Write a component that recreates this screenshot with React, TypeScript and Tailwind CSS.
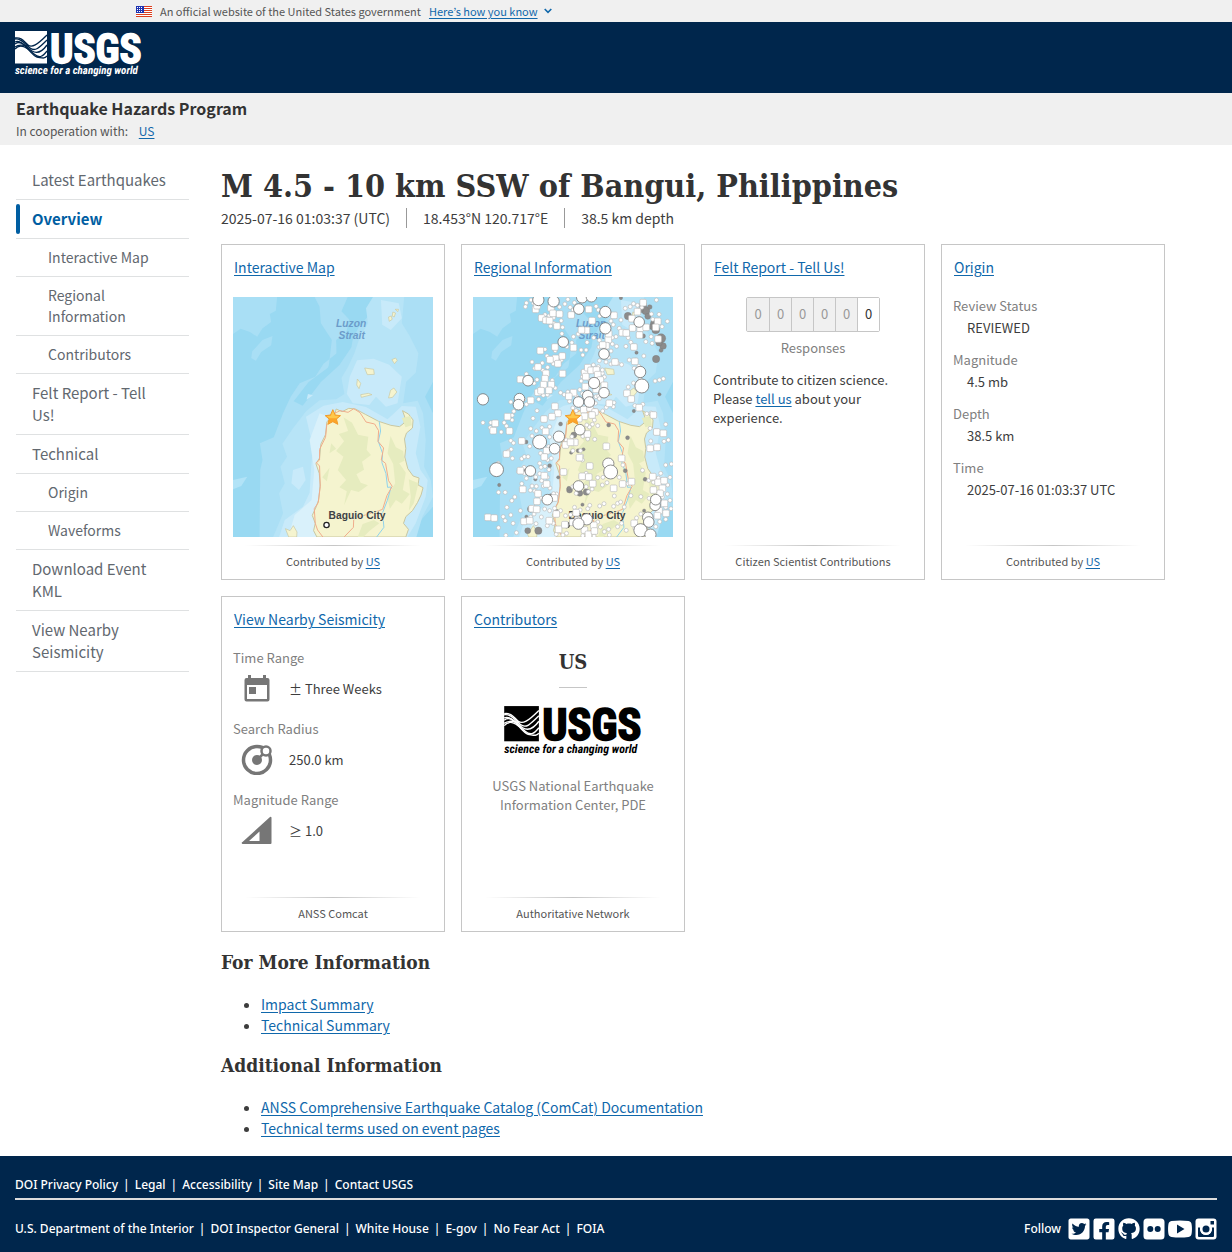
import React from 'react';
import { FaFacebookSquare, FaGithub, FaTwitterSquare } from 'react-icons/fa';

const link = 'text-[#1068ab] underline underline-offset-2';
const serif = "font-['DejaVu_Serif_Condensed','DejaVu_Serif',serif] font-bold";

const navItems = [
  { label: 'Latest Earthquakes' },
  { label: 'Overview', active: true },
  { label: 'Interactive Map', sub: true },
  { label: 'Regional Information', sub: true },
  { label: 'Contributors', sub: true },
  { label: 'Felt Report - Tell Us!' },
  { label: 'Technical' },
  { label: 'Origin', sub: true },
  { label: 'Waveforms', sub: true },
  { label: 'Download Event KML' },
  { label: 'View Nearby Seismicity' },
];

const originFacts = [
  ['Review Status', 'REVIEWED'],
  ['Magnitude', '4.5 mb'],
  ['Depth', '38.5 km'],
  ['Time', '2025-07-16 01:03:37 UTC'],
];

const footerLinks = [
  ['DOI Privacy Policy', 'Legal', 'Accessibility', 'Site Map', 'Contact USGS'],
  ['U.S. Department of the Interior', 'DOI Inspector General', 'White House', 'E-gov', 'No Fear Act', 'FOIA'],
];

// x, y, radius
const bigQuakes = [
  [236, 180, 17], [282, 184, 17], [368, 172, 17], [396, 170, 16], [358, 207, 16], [438, 216, 17], [438, 265, 17], [540, 246, 16],
  [311, 306, 16], [434, 342, 16], [543, 396, 17], [548, 438, 21], [205, 422, 16], [69, 478, 17], [179, 476, 16], [176, 494, 16],
  [404, 429, 17], [434, 458, 16], [385, 467, 16], [357, 486, 16], [390, 486, 16], [361, 569, 16], [298, 590, 17], [240, 606, 21],
  [285, 626, 16], [110, 689, 21], [212, 693, 16], [447, 671, 17], [454, 696, 21], [357, 738, 16], [263, 779, 16], [588, 796, 16],
  [590, 779, 16], [566, 832, 16], [569, 846, 16], [544, 871, 20], [574, 884, 17], [382, 838, 17], [357, 851, 17],
];

const squareQuakes = [
  [228, 208], [232, 197], [246, 234], [259, 241], [270, 242], [292, 258], [274, 204], [335, 225], [388, 208], [398, 242], [381, 271],
  [366, 270], [464, 226], [535, 215], [518, 236], [552, 188], [596, 244], [590, 262], [520, 264], [543, 265], [541, 285], [489, 278],
  [447, 299], [440, 317], [430, 315], [524, 321], [527, 364], [467, 366], [242, 332], [286, 321], [342, 323], [308, 348], [288, 355],
  [271, 359], [295, 371], [235, 381], [309, 401], [259, 400], [182, 418], [256, 416], [252, 434], [275, 434], [235, 457], [244, 452],
  [268, 451], [213, 481], [286, 499], [295, 520], [253, 537], [277, 530], [143, 530], [106, 550], [100, 572], [149, 573], [186, 603],
  [258, 574], [140, 642], [261, 632], [254, 651], [376, 398], [385, 383], [395, 391], [411, 390], [415, 404], [379, 410], [423, 420],
  [435, 436], [410, 448], [378, 440], [342, 458], [328, 469], [503, 460], [516, 477], [450, 490], [540, 503], [583, 525], [373, 509],
  [392, 504], [407, 516], [398, 525], [375, 529], [358, 536], [384, 582], [346, 607], [318, 615], [333, 607], [441, 619], [573, 625],
  [594, 622], [593, 576], [613, 580], [360, 653], [487, 655], [312, 696], [391, 678], [368, 709], [388, 711], [400, 731], [490, 732],
  [463, 745], [517, 725], [581, 710], [189, 748], [182, 692], [254, 707], [261, 732], [235, 761], [232, 784], [217, 806], [231, 808],
  [284, 774], [290, 822], [84, 832], [103, 834], [193, 844], [210, 842], [269, 842], [297, 868], [316, 854], [375, 870], [387, 883],
  [403, 856], [405, 873], [597, 727], [610, 745], [603, 760], [616, 790], [600, 812], [595, 827], [340, 847], [583, 750], [615, 722],
  [621, 820], [280, 220], [300, 222], [448, 281], [501, 279], [561, 262], [355, 840], [525, 850], [350, 818], [597, 297],
];

const smallQuakes = [
  [200, 189], [197, 200], [214, 180], [222, 190], [256, 224], [268, 228], [282, 233], [283, 250], [273, 258], [305, 242], [309, 262],
  [307, 281], [316, 192], [300, 201], [332, 202], [341, 210], [325, 178], [410, 199], [417, 210], [421, 228], [455, 243], [462, 254],
  [480, 265], [470, 290], [459, 293], [485, 240], [498, 205], [513, 200], [523, 191], [535, 196], [548, 202], [577, 222], [581, 238],
  [625, 244], [609, 260], [576, 290], [579, 310], [560, 305], [515, 307], [507, 293], [500, 319], [554, 348], [592, 180], [600, 223],
  [342, 290], [356, 282], [383, 307], [403, 293], [420, 301], [419, 321], [455, 333], [459, 312], [472, 319], [448, 352], [420, 362],
  [337, 308], [322, 320], [287, 332], [256, 328], [262, 348], [305, 361], [281, 371], [248, 369], [217, 366], [225, 385], [250, 391],
  [264, 382], [232, 419], [223, 430], [200, 402], [278, 421], [287, 444], [263, 464], [251, 466], [237, 478], [200, 493], [192, 478],
  [162, 514], [157, 526], [133, 548], [69, 548], [93, 548], [91, 563], [124, 576], [157, 540], [213, 566], [220, 535], [232, 512],
  [153, 486], [140, 558], [153, 602], [161, 609], [154, 628], [158, 655], [145, 634], [115, 670], [186, 656], [194, 650], [205, 650],
  [210, 619], [217, 588], [230, 573], [247, 563], [270, 560], [270, 591], [253, 610], [267, 620], [243, 640], [264, 660], [275, 655],
  [240, 670], [244, 682], [256, 679], [268, 689], [240, 701], [228, 711], [263, 712], [246, 722], [251, 738], [271, 744], [230, 739],
  [217, 738], [212, 751], [225, 753], [244, 775], [200, 715], [194, 700], [176, 695], [193, 682], [186, 731], [116, 757], [136, 757],
  [165, 771], [156, 782], [141, 802], [130, 830], [136, 842], [153, 825], [182, 812], [160, 850], [116, 863], [138, 886], [170, 878],
  [223, 822], [213, 831], [229, 851], [245, 831], [255, 807], [270, 812], [263, 857], [281, 850], [285, 805], [291, 762], [282, 761],
  [303, 812], [318, 827], [333, 824], [345, 802], [362, 810], [385, 806], [391, 796], [421, 798], [434, 791], [463, 799], [475, 790],
  [484, 786], [465, 768], [515, 767], [545, 770], [570, 775], [495, 801], [545, 822], [532, 834], [527, 865], [501, 871], [487, 850],
  [475, 860], [448, 868], [435, 875], [423, 861], [415, 846], [404, 888], [370, 887], [321, 880], [310, 885], [290, 883], [450, 885],
  [610, 771], [625, 762], [633, 781], [620, 802], [636, 806], [620, 838], [602, 845], [590, 860], [626, 735], [633, 712], [598, 714],
  [569, 721], [583, 727], [605, 700], [620, 675], [637, 672], [550, 691], [628, 600], [615, 604], [575, 603], [573, 565], [620, 553],
  [576, 519], [563, 521], [551, 493], [527, 497], [507, 441], [523, 429], [543, 418], [588, 423], [601, 420], [613, 416], [510, 360],
  [539, 379], [525, 385], [487, 374], [475, 370], [455, 372], [440, 366], [464, 488], [462, 500], [441, 502], [430, 513], [408, 490],
  [369, 461], [361, 449], [351, 469], [325, 456], [314, 464], [303, 458], [330, 484], [340, 504], [350, 512], [405, 540], [399, 553],
  [390, 561], [382, 555], [370, 589], [385, 597], [406, 598], [415, 557], [337, 590], [320, 600], [340, 632], [363, 632], [367, 648],
  [369, 660], [380, 700], [380, 740], [398, 747], [340, 740], [350, 760], [387, 755], [415, 713], [429, 735], [431, 712], [480, 712],
  [491, 675], [506, 731], [443, 728], [370, 395], [369, 410], [365, 423], [429, 400], [435, 411], [429, 390], [402, 375], [417, 380],
  [370, 345], [380, 330], [365, 330], [391, 420], [410, 470], [418, 468], [420, 476], [345, 188],
];

const deepQuakes = [
  [552, 196, 11], [560, 212, 12], [572, 201, 7], [545, 210, 8], [506, 228, 11], [566, 229, 9], [585, 250, 11], [590, 269, 12],
  [579, 260, 9], [606, 295, 14], [612, 318, 10], [600, 308, 10], [606, 331, 6], [591, 357, 11], [532, 338, 5], [552, 288, 7],
  [485, 174, 5], [601, 463, 5], [524, 513, 5], [303, 552, 6], [448, 555, 6], [505, 593, 6], [343, 585, 9], [199, 606, 6], [335, 638, 5],
  [356, 632, 6], [372, 628, 5], [270, 677, 6], [296, 712, 5], [227, 718, 5], [498, 692, 6], [558, 718, 6], [330, 750, 9], [328, 745, 6],
  [361, 760, 9], [381, 756, 10], [274, 770, 9], [118, 735, 5], [213, 807, 10], [369, 794, 5], [204, 872, 9], [236, 872, 11],
  [200, 830, 5], [291, 815, 7], [555, 812, 5], [195, 690, 8],
];

// Coordinates of both thumbnails share one 603x720 space.
const MapThumb = ({ label, quakes }: { label: string; quakes?: boolean }) => (
  <svg viewBox="39 171 603 720" className="block h-60 w-full" role="img" aria-label={label} preserveAspectRatio="none">
    <rect x="39" y="171" width="603" height="720" fill="#99d9f2" />
    <path fill="#a9dff5" d="M39 171H172L168 212 150 222 154 246 128 265 112 290 90 276 62 266 39 282ZM97 334L128 300 158 288 154 316 124 336 108 362 94 354Z" />
    <path fill="#abdff5" d="M285 171H385L366 214 391 240 380 278 350 300 352 340 312 371 287 410 240 430 213 470 190 520 162 592 120 610 128 660 121 690 119 891H560L642 800V520L618 470 642 425V171H480L452 222 418 262 380 335 354 375 327 384 337 300 304 250 300 200Z" />
    <path fill="#99d9f2" d="M386 171H449L441 225 405 270 396 322 360 375 304 426 270 470 249 497 222 484 267 426 324 384 351 345 352 302 382 276 391 235 372 214Z" />
    <path fill="#b7e4f7" d="M461 171H555L548 250 570 285 598 340 590 398 561 425 552 490 596 482 612 520 620 600 615 680 635 720 642 770 610 830 592 891H160L190 820 178 760 195 730 182 680 202 650 188 611 220 565 260 513 300 481 350 478 375 462 366 414 386 380 405 340 422 290 446 250 440 205Z" />
    <path fill="#c8eafa" d="M485 180L539 190 548 235 515 270 489 254ZM413 361L463 356 510 374 548 410 535 490 500 500 470 470 450 495 400 490 382 461 391 410ZM259 530L312 497 370 486 440 501 505 538 548 498 590 500 604 560 590 640 604 690 626 720 620 770 590 850 565 891H178L195 840 250 800 270 758 274 690 280 620ZM220 690L250 680 258 720 238 750 215 730ZM265 462L280 466 261 479Z" />
    <path fill="#b2e3f7" d="M39 720L82 710 64 738 39 748Z" />
    <path fill="#d9f1fb" d="M300 520L270 600 284 690 276 780 225 825 205 891H290L305 640 326 530Z" />
    <path
      fill="#f5f4cf"
      stroke="#c9c7a2"
      strokeWidth="3"
      d="M322 545L345 527 350 507 368 515 388 505 408 507 438 523 478 544 515 556 541 560 555 549 557 531 550 512 568 522 582 540 580 564 562 579 556 597 560 625 557 651 566 686 582 708 600 714 597 735 612 743 606 765 595 788 580 812 560 830 553 850 568 868 560 891H292L282 872 287 850 278 826 290 800 297 780 302 735 299 700 289 671 300 654 304 612 318 584Z"
    />
    <path fill="#f5f4cf" stroke="#c9c7a2" strokeWidth="2" d="M436 384L463 388 465 403 444 404ZM414 417L424 430 419 446 412 435ZM424 464L447 460 458 464 426 472ZM514 451L524 444 533 456 520 472 508 474ZM518 359L529 354 534 361 526 371ZM508 231L516 228 519 238 510 244ZM521 216L529 219 525 231 519 228ZM528 208L538 208 536 215ZM197 866L211 872 221 857 232 876 231 891H207Z" />
    <path fill="#e6ecbf" d="M372 532L398 548 416 584 447 590 442 630 455 645 428 665 434 689 411 703 424 728 446 736 418 756 395 750 374 796 382 754 360 742 380 720 355 690 372 650 350 633 374 604 358 582 386 573ZM514 588L530 622 552 633 556 662 540 670 560 698 551 750 572 762 548 791 530 780 512 806 504 770 528 730 522 672 505 640ZM308 712L330 683 322 724ZM335 610L350 626 330 640ZM569 718L598 730 584 790 569 812 575 770ZM430 852L464 840 480 850 450 873 432 891H415ZM548 534L574 528 578 556 559 562Z" />
    <path fill="none" stroke="#8fd3ec" strokeWidth="3" d="M480 545L484 573 477 604 490 640 488 668 500 700 505 742 516 741 504 782 490 818 494 862 472 891" />
    <path fill="none" stroke="#f0ac8c" strokeWidth="3" d="M322 552L318 592 300 628 300 660 290 668 300 678 302 740 296 788 284 806 287 850 294 870 310 891M345 520L362 512 386 517 403 506 422 518 440 546 466 552 478 572 476 604 493 624 486 660 499 670 508 722 519 739 503 767 490 808 462 818 431 827 403 838 402 862 374 891" />
    <g fontFamily="Liberation Sans, Arial, sans-serif" fontWeight="bold">
      <g fill="#6c9cca" fontStyle="italic" fontSize="31" textAnchor="middle">
        <text x="395" y="260">Luzon</text>
        <text x="397" y="296">Strait</text>
      </g>
      <text x="327" y="838" fontSize="31" fill="#3d4246" stroke="#f5f4cf" strokeWidth="4" paintOrder="stroke">Baguio City</text>
    </g>
    <circle cx="321" cy="855" r="8" fill="#fff" stroke="#222" strokeWidth="4" />
    {quakes && (
      <>
        <g fill="#8b8b8b" stroke="#777" strokeWidth="1">
          {deepQuakes.map(([x, y, r], i) => <circle key={i} cx={x} cy={y} r={r} />)}
        </g>
        <g fill="#fff" stroke="#bbb" strokeWidth="2">
          {smallQuakes.map(([x, y], i) => <circle key={i} cx={x} cy={y} r="6" />)}
          {squareQuakes.map(([x, y], i) => <rect key={i} x={x - 10} y={y - 10} width="20" height="20" rx="4" />)}
        </g>
        <g fill="#fff" stroke="#777" strokeWidth="2.5">
          {bigQuakes.map(([x, y, r], i) => <circle key={i} cx={x} cy={y} r={r} />)}
        </g>
      </>
    )}
    <path d="M340 509L347 525 363 527 351 537 355 553 340 545 325 553 329 537 317 527 333 525Z" fill="#fca528" stroke="#f39c2c" strokeWidth="3" strokeLinejoin="round" />
    <path d="M340 513L346 527 359 529 350 535H330L321 529 334 527Z" fill="#ffc84a" />
  </svg>
);

const UsgsLogo = ({ className, wave }: { className: string; wave: string }) => (
  <svg viewBox="0 0 127 48" className={`overflow-visible ${className}`} fill="currentColor" role="img" aria-label="USGS science for a changing world">
    <rect y="1" width="32" height="32.5" />
    <g fill="none" stroke={wave} strokeWidth="1.3">
      <path d="M0 8C7 7 9 12 13 15S22 15 32 5" />
      <path d="M0 9C6 8 10 14 15 18S24 18 32 10" />
      <path d="M0 14C6 9 12 18 17 21S27 22 32 15" />
      <path d="M0 19C6 12 13 19 19 24S28 26 32 21" />
      <path d="M0 12C8 8 16 26 22 27S29 29 32 26" />
      <path d="M0 17C5 13 9 16 14 16" />
    </g>
    <g fontFamily="Liberation Sans Narrow, Roboto Condensed, Liberation Sans, sans-serif" fontWeight="bold" textRendering="geometricPrecision">
      <text x="35" y="32.500" fontSize="41" stroke="currentColor" strokeWidth="1.5">USGS</text>
      <text x="0" y="44" fontSize="11" fontStyle="italic">science for a changing world</text>
    </g>
  </svg>
);

const Card = ({ title, footer, children }: { title: string; footer: React.ReactNode; children: React.ReactNode }) => (
  <section className="flex h-84 w-56 flex-col border border-[#c6c6c6] px-[11px] text-[13px] leading-[19px]">
    <h2 className="px-px pt-[11px] text-[14px] leading-[22px]">
      <a href="#" className={link}>{title}</a>
    </h2>
    <div className="mt-[19px] flex-1">{children}</div>
    <div className="mx-3 h-px bg-linear-to-r from-transparent via-[#c6c6c6] to-transparent" />
    <p className="pt-[6px] pb-[9px] text-center text-[11px] leading-[18px] text-[#555]">{footer}</p>
  </section>
);

const ContributedBy = () => (
  <>Contributed by <a href="#" className={link}>US</a></>
);

const searchFacts = [
  {
    label: 'Time Range',
    value: '± Three Weeks',
    icon: <path fillRule="evenodd" d="M7 0h3v3h12V0h3v3h1.500a2 2 0 0 1 2 2v19.500a2 2 0 0 1-2 2h-21a2 2 0 0 1-2-2V5a2 2 0 0 1 2-2H7ZM6 10v14h20V10ZM8 12h7v7H8Z" />,
  },
  {
    label: 'Search Radius',
    value: '250.0 km',
    icon: (
      <g fill="none" stroke="currentColor">
        <circle cx="16" cy="14" r="13.500" strokeWidth="3.500" />
        <circle cx="16" cy="14" r="5" fill="currentColor" stroke="none" />
        <path d="M16 14L23 7" strokeWidth="2.500" />
        <circle cx="25" cy="5" r="4.500" fill="#fff" strokeWidth="2.500" />
      </g>
    ),
  },
  {
    label: 'Magnitude Range',
    value: '≥ 1.0',
    icon: <path fillRule="evenodd" d="M29 0a1 1 0 0 1 1.500 1V26a1 1 0 0 1-1 1H2a1 1 0 0 1-.5-2ZM18.500 14.500L8 24h10.500Z" />,
  },
];

const App = () => {
  return (
    <div className="font-['Noto_Sans_CJK_JP',sans-serif] text-[#3d3d3d]">
      <div className="flex h-[22px] items-center bg-[#f0f0f0] pl-[136px] text-[11px] leading-[18px] text-[#555]">
        <svg viewBox="0 0 16 11" className="mr-2 h-[11px] w-4" aria-hidden="true">
          <rect width="16" height="11" fill="#fff" />
          <path d="M0 .5h16M0 2.500h16M0 4.500h16M0 6.500h16M0 8.500h16M0 10.500h16" stroke="#db3e1f" strokeWidth="1" />
          <rect width="8" height="7" fill="#1e33b1" />
          <path d="M1 1.500h6M1 3.500h6M1 5.500h6" stroke="#fff" strokeDasharray="1 1" />
        </svg>
        <span className="mr-2">An official website of the United States government</span>
        <button type="button" className={`flex items-center gap-1.5 ${link}`}>
          Here’s how you know
          <svg viewBox="0 0 8 6" className="h-1.5 w-2" fill="none" stroke="currentColor" strokeWidth="1.6" aria-hidden="true">
            <path d="M.7 1L4 4.300 7.300 1" />
          </svg>
        </button>
      </div>

      <header>
        <div className="h-[71px] bg-[#00264c] px-[15px] pt-2 text-white">
          <a href="#" className="inline-block">
            <UsgsLogo className="block h-12 w-[127px]" wave="#00264c" />
          </a>
        </div>
        <div className="h-[52px] bg-[#f0f0f0] px-4 pt-1">
          <p className="text-[16px] leading-[22px] font-bold text-[#333]">Earthquake Hazards Program</p>
          <p className="pt-[3px] text-[12px] leading-[18px] text-[#555]">
            In cooperation with: <a href="#" className={`ml-2 ${link}`}>US</a>
          </p>
        </div>
      </header>

      <div className="flex gap-8 px-4 pt-4 pb-[17px]">
        <nav className="w-[173px] shrink-0">
          <ul>
            {navItems.map((item) => (
              <li key={item.label} className="border-b border-[#dfe1e2]">
                {item.active ? (
                  <a href="#" className="relative block px-4 py-2 text-[15px] leading-[22px] font-bold text-[#005ea2]">
                    <span className="absolute inset-y-1 left-0 w-1 rounded-full bg-[#005ea2]" />
                    {item.label}
                  </a>
                ) : (
                  <a
                    href="#"
                    className={`block py-2 pr-5 text-[#62686f] ${item.sub ? 'pl-8 text-[14px] leading-[21px]' : 'pl-4 text-[15px] leading-[22px]'}`}
                  >
                    {item.label}
                  </a>
                )}
              </li>
            ))}
          </ul>
        </nav>

        <main className="min-w-0 flex-1">
          <h1 className={`pt-1 text-[32px] leading-[42px] text-[#333] ${serif}`}>M 4.5 - 10 km SSW of Bangui, Philippines</h1>
          <ul className="flex pt-px text-[14px] leading-5">
            <li className="pr-4">2025-07-16 01:03:37 (UTC)</li>
            <li className="border-l border-[#999] px-4">18.453°N 120.717°E</li>
            <li className="border-l border-[#999] px-4">38.5 km depth</li>
          </ul>

          <div className="mt-4 flex flex-wrap gap-4">
            <Card title="Interactive Map" footer={<ContributedBy />}>
              <MapThumb label="Map of northern Luzon" />
            </Card>
            <Card title="Regional Information" footer={<ContributedBy />}>
              <MapThumb label="Map of regional seismicity" quakes />
            </Card>
            <Card title="Felt Report - Tell Us!" footer="Citizen Scientist Contributions">
              <div className="mx-auto flex w-fit rounded-xs border border-[#c6c6c6] leading-[31px]">
                {['0', '0', '0', '0', '0', '0'].map((digit, i) => (
                  <span
                    key={i}
                    className="w-[22px] border-l border-[#c6c6c6] bg-[#f0f0f0] pb-0.5 text-center text-[#999] first:border-l-0 last:bg-white last:text-[#333]"
                  >
                    {digit}
                  </span>
                ))}
              </div>
              <p className="pt-[6px] text-center text-[#808080]">Responses</p>
              <p className="pt-[13px]">
                Contribute to citizen science. Please <a href="#" className={link}>tell us</a> about your experience.
              </p>
            </Card>
            <Card title="Origin" footer={<ContributedBy />}>
              <dl>
                {originFacts.map(([term, value]) => (
                  <div key={term} className="pb-[10px]">
                    <dt className="leading-[18px] text-[#808080]">{term}</dt>
                    <dd className="pl-[14px] leading-[26px]">{value}</dd>
                  </div>
                ))}
              </dl>
            </Card>
            <Card title="View Nearby Seismicity" footer="ANSS Comcat">
              <dl>
                {searchFacts.map(({ label, value, icon }) => (
                  <div key={label} className="pb-[11px]">
                    <dt className="leading-[18px] text-[#808080]">{label}</dt>
                    <dd className="flex h-[42px] items-center gap-4 pl-2">
                      <svg viewBox="0 -3 32 32" className="size-8 text-[#767676]" fill="currentColor" aria-hidden="true">{icon}</svg>
                      {value}
                    </dd>
                  </div>
                ))}
              </dl>
            </Card>
            <Card title="Contributors" footer="Authoritative Network">
              <div className="text-center text-[#808080]">
                <h3 className={`mx-auto w-fit border-b border-[#c6c6c6] pb-3 text-[20px] leading-[26px] text-[#333] ${serif}`}>US</h3>
                <UsgsLogo className="mx-auto mt-[17px] h-[52px] w-[138px] text-black" wave="#fff" />
                <p className="px-4 pt-[19px]">USGS National Earthquake Information Center, PDE</p>
              </div>
            </Card>
          </div>

          <h2 className={`pt-4 text-[19px] leading-7 text-[#333] ${serif}`}>For More Information</h2>
          <ul className="list-disc pt-[18px] pl-10 text-[14px] leading-[21px]">
            <li><a href="#" className={link}>Impact Summary</a></li>
            <li><a href="#" className={link}>Technical Summary</a></li>
          </ul>
          <h2 className={`pt-[15px] text-[19px] leading-7 text-[#333] ${serif}`}>Additional Information</h2>
          <ul className="list-disc pt-[18px] pl-10 text-[14px] leading-[21px]">
            <li><a href="#" className={link}>ANSS Comprehensive Earthquake Catalog (ComCat) Documentation</a></li>
            <li><a href="#" className={link}>Technical terms used on event pages</a></li>
          </ul>
        </main>
      </div>

      <footer className="bg-[#00264c] px-[15px] pt-[19px] pb-3 font-['Noto_Sans',sans-serif] text-[12px] leading-5 font-medium text-white">
        <ul className="flex border-b-2 border-[#dcdcdc] pb-[3px]">
          {footerLinks[0].map((label) => (
            <li key={label} className="group flex">
              <a href="#">{label}</a>
              <span className="px-[5px] group-last:hidden">|</span>
            </li>
          ))}
        </ul>
        <div className="flex items-center justify-between pt-[17px]">
          <ul className="flex">
            {footerLinks[1].map((label) => (
              <li key={label} className="group flex">
                <a href="#">{label}</a>
                <span className="px-[5px] group-last:hidden">|</span>
              </li>
            ))}
          </ul>
          <div className="flex items-center gap-[3px]">
            <span className="pr-1">Follow</span>
            <a href="#" aria-label="Twitter"><FaTwitterSquare className="h-6 w-[22px]" /></a>
            <a href="#" aria-label="Facebook"><FaFacebookSquare className="h-6 w-[22px]" /></a>
            <a href="#" aria-label="GitHub"><FaGithub className="size-[22px]" /></a>
            <a href="#" aria-label="Flickr">
              <svg viewBox="0 0 22 22" className="size-[22px]" fill="currentColor">
                <path fillRule="evenodd" d="M4 .5h14a3.500 3.500 0 0 1 3.500 3.500v14a3.500 3.500 0 0 1-3.500 3.500H4A3.500 3.500 0 0 1 .5 18V4A3.500 3.500 0 0 1 4 .5ZM7.300 8a3 3 0 1 0 0 6 3 3 0 0 0 0-6ZM14.700 8a3 3 0 1 0 0 6 3 3 0 0 0 0-6Z" />
              </svg>
            </a>
            <a href="#" aria-label="YouTube">
              <svg viewBox="0 0 24 22" className="h-[22px] w-6" fill="currentColor">
                <path fillRule="evenodd" d="M3.500 3Q12 1.800 20.500 3 23.500 3.500 23.700 7 24.200 11 23.700 15 23.500 18.500 20.500 19 12 20.200 3.500 19 .5 18.500.3 15-.2 11 .3 7 .5 3.500 3.500 3ZM9 6.500v9L16.500 11Z" />
              </svg>
            </a>
            <a href="#" aria-label="Instagram">
              <svg viewBox="0 0 22 22" className="size-[22px]">
                <rect x=".5" y=".5" width="21" height="21" rx="3" fill="currentColor" />
                <path d="M3 9.500h2.200a6 6 0 1 0 11.600 0H19V18a1 1 0 0 1-1 1H4a1 1 0 0 1-1-1ZM15.500 3H19v3.500h-3.500Z" fill="#00264c" />
                <circle cx="11" cy="11" r="6" fill="currentColor" />
                <circle cx="11" cy="11" r="3.500" fill="#00264c" />
              </svg>
            </a>
          </div>
        </div>
      </footer>
    </div>
  );
};

export default App;
